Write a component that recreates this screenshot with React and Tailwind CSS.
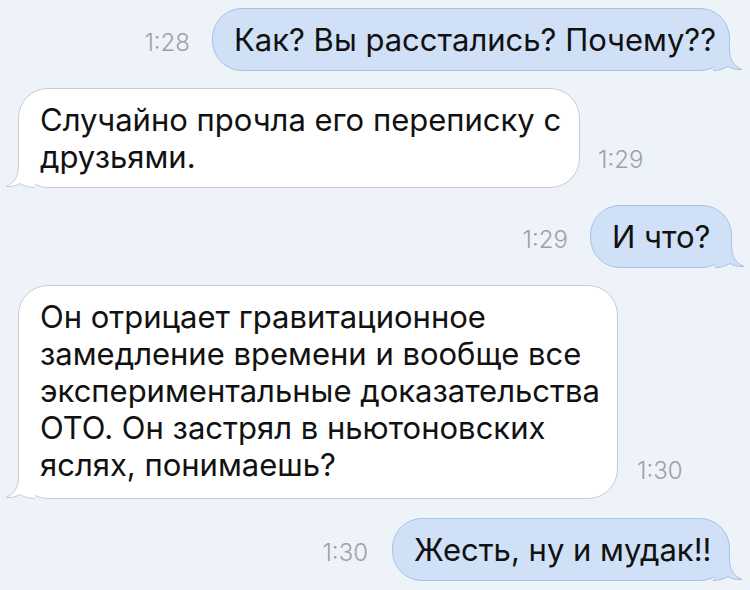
import React from "react";

function Tail({ side }) {
  const out = side === "right";
  const fill = out ? "#cfe0f7" : "#ffffff";
  const stroke = out ? "#a9c1e2" : "#c9ccd2";
  return (
    <svg
      width="30"
      height="30"
      viewBox="0 0 30 30"
      className={
        out
          ? "absolute right-[-14px] bottom-[-1px]"
          : "absolute left-[-14px] bottom-[-1px] -scale-x-100"
      }
    >
      <path
        d="M0 0 L16.5 0 L16.5 8 C16.5 19 21 25 29 28.5 C23 29 18.5 27.5 15 25.5 C11 28 6 29.5 0 29.5 Z"
        fill={fill}
      />
      <path
        d="M16.5 0 L16.5 8 C16.5 19 21 25 29 28.5 C23 29 18.5 27.5 15 25.5 C11 28 6 29.5 0 29.5"
        fill="none"
        stroke={stroke}
        strokeWidth="1"
      />
    </svg>
  );
}

function Time({ children }) {
  return (
    <span className="mb-[15px] text-[24px] leading-[26px] font-light text-[#9da1a8]">
      {children}
    </span>
  );
}

function Bubble({ side, width, extra = "", children }) {
  const out = side === "right";
  return (
    <div
      className={
        "relative rounded-[30px] border px-[21px] pt-[12px] pb-[12px] text-[31px] leading-[37px] text-[#111] " +
        (out ? "bg-[#cfe0f7] border-[#a9c1e2] " : "bg-white border-[#c9ccd2] ") +
        extra
      }
      style={{ width }}
    >
      <Tail side={side} />
      <div className="relative whitespace-nowrap">{children}</div>
    </div>
  );
}

export default function App() {
  return (
    <div className="w-[750px] h-[590px] overflow-hidden bg-[#eef2f9] font-['Inter',sans-serif] flex flex-col gap-[17px] pt-[8px]">
      <div className="flex items-end justify-end gap-[22px] pr-[20px]">
        <Time>1:28</Time>
        <Bubble side="right" width={518}>
          Как? Вы расстались? Почему??
        </Bubble>
      </div>

      <div className="flex items-end gap-[18px] pl-[18px]">
        <Bubble side="left" width={562}>
          Случайно прочла его переписку с
          <br />
          друзьями.
        </Bubble>
        <Time>1:29</Time>
      </div>

      <div className="flex items-end justify-end gap-[22px] pr-[18px]">
        <Time>1:29</Time>
        <Bubble side="right" width={142}>
          И что?
        </Bubble>
      </div>

      <div className="flex items-end gap-[19px] pl-[18px]">
        <Bubble side="left" width={600} extra="!pb-[15px]">
          Он отрицает гравитационное
          <br />
          замедление времени и вообще все
          <br />
          экспериментальные доказательства
          <br />
          ОТО. Он застрял в ньютоновских
          <br />
          яслях, понимаешь?
        </Bubble>
        <Time>1:30</Time>
      </div>

      <div className="flex items-end justify-end gap-[24px] pr-[20px] mt-[2px]">
        <Time>1:30</Time>
        <Bubble side="right" width={338}>
          Жесть, ну и мудак!!
        </Bubble>
      </div>
    </div>
  );
}
